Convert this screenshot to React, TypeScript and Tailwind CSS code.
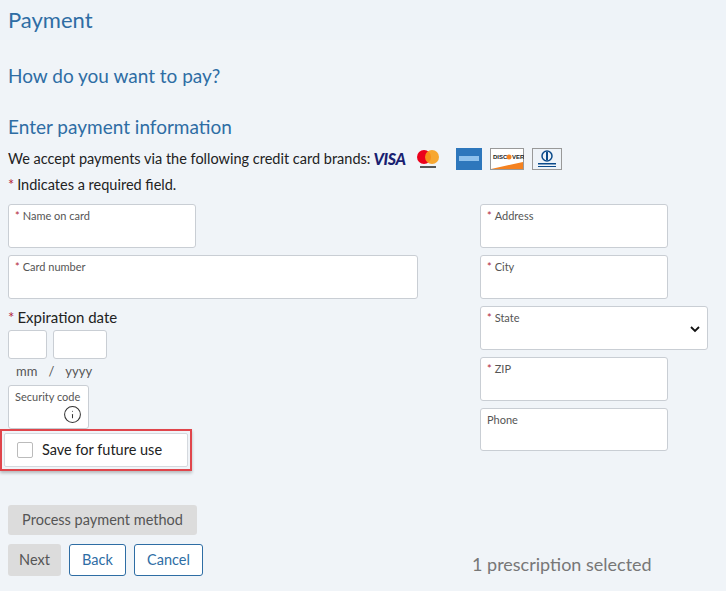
import { Info } from "lucide-react";

const Star = () => <span className="text-[#b3263a] mr-[3px]">*</span>;

const Field = ({ label, req, w, h = "h-[44px]" }: { label: string; req?: boolean; w: string; h?: string }) => (
  <div className={`${w} ${h} bg-white border border-[#c9ced4] rounded-[3px] px-[6px] pt-[3px] text-[11px] text-[#555]`}>
    {req && <Star />}
    {label}
  </div>
);

function Cards() {
  return (
    <span className="inline-flex items-center gap-[8px] ml-[3px]">
      <span className="text-[#1a1f71] font-black italic text-[16px] tracking-tight">VISA</span>
      <svg width="28" height="22" viewBox="0 0 28 22">
        <circle cx="10" cy="9" r="7" fill="#eb001b" />
        <circle cx="18" cy="9" r="7" fill="#f79e1b" opacity="0.9" />
        <rect x="6" y="18" width="16" height="2" fill="#555" />
      </svg>
      <svg width="26" height="22" viewBox="0 0 26 22" className="ml-[6px]">
        <rect width="26" height="22" fill="#2e77bc" />
        <rect x="3" y="8" width="20" height="5" fill="#8fc1ec" />
      </svg>
      <svg width="34" height="22" viewBox="0 0 34 22">
        <rect x="0.5" y="0.5" width="33" height="21" fill="#fff" stroke="#999" />
        <text x="3" y="11" fontSize="6" fontWeight="bold" fill="#222" fontFamily="Liberation Sans">DISC</text>
        <circle cx="19" cy="9" r="2.5" fill="#f58220" />
        <text x="22" y="11" fontSize="6" fontWeight="bold" fill="#222" fontFamily="Liberation Sans">VER</text>
        <path d="M1 21 L33 14 L33 21 Z" fill="#f58220" />
      </svg>
      <svg width="30" height="22" viewBox="0 0 30 22">
        <rect x="0.5" y="0.5" width="29" height="21" fill="#eef3f8" stroke="#999" />
        <circle cx="15" cy="8" r="5" fill="none" stroke="#0a4a8a" strokeWidth="1.5" />
        <rect x="14" y="4" width="2" height="8" fill="#0a4a8a" />
        <rect x="6" y="15" width="18" height="1.5" fill="#0a4a8a" />
        <rect x="6" y="18" width="18" height="1" fill="#0a4a8a" />
      </svg>
    </span>
  );
}

export default function App() {
  return (
    <div className="w-[726px] h-[591px] bg-[#f0f4f8] text-[#222] overflow-hidden" style={{ fontFamily: "Lato, 'Open Sans', sans-serif" }}>
      <div className="bg-[#eef3f8] h-[40px] px-[8px] pt-[3px] text-[22px] text-[#2e6da4]">Payment</div>
      <div className="px-[8px]">
        <div className="mt-[22px] text-[19px] text-[#2e6da4]">How do you want to pay?</div>
        <div className="mt-[22px] text-[19px] text-[#2e6da4]">Enter payment information</div>
        <div className="mt-[6px] flex items-center text-[14.5px] h-[24px]">
          We accept payments via the following credit card brands:
          <Cards />
        </div>
        <div className="text-[14.5px] mt-[3px]"><Star />Indicates a required field.</div>
        <div className="flex mt-[8px]">
          <div className="w-[472px] flex flex-col">
            <Field label="Name on card" req w="w-[188px]" />
            <div className="mt-[7px]"><Field label="Card number" req w="w-[410px]" /></div>
            <div className="mt-[7px] text-[15px]"><Star />Expiration date</div>
            <div className="flex gap-[6px] mt-[2px]">
              <div className="w-[39px] h-[29px] bg-white border border-[#c9ced4] rounded-[3px]" />
              <div className="w-[54px] h-[29px] bg-white border border-[#c9ced4] rounded-[3px]" />
            </div>
            <div className="flex text-[13px] text-[#555] mt-[3px] pl-[8px] gap-[11px]">
              <span>mm</span><span>/</span><span>yyyy</span>
            </div>
            <div className="mt-[3px] w-[81px] h-[44px] bg-white border border-[#c9ced4] rounded-[3px] px-[6px] pt-[3px] text-[11px] text-[#555] flex flex-col">
              Security code
              <Info size={19} strokeWidth={1.3} className="self-end text-[#333]" />
            </div>
            <div className="-ml-[8px] w-[192px] h-[42px] border-2 border-[#e0454b] p-[2px] shadow-[0_2px_3px_rgba(0,0,0,0.25)]">
              <div className="h-full bg-white border border-[#d5d9de] rounded-[2px] flex items-center pl-[12px] gap-[9px] text-[14.5px]">
                <span className="w-[16px] h-[16px] border border-[#bbb] rounded-[2px] bg-white" />
                Save for future use
              </div>
            </div>
          </div>
          <div className="flex flex-col gap-[7px]">
            <Field label="Address" req w="w-[188px]" />
            <Field label="City" req w="w-[188px]" />
            <div className="w-[228px] h-[44px] bg-white border border-[#c9ced4] rounded-[3px] px-[6px] pt-[3px] text-[11px] text-[#555] flex justify-between">
              <span><Star />State</span>
              <svg width="12" height="12" viewBox="0 0 12 12" className="mt-[13px]"><path d="M2 4 L6 8 L10 4" fill="none" stroke="#111" strokeWidth="1.8" /></svg>
            </div>
            <Field label="ZIP" req w="w-[188px]" />
            <Field label="Phone" w="w-[188px]" h="h-[43px]" />
          </div>
        </div>
        <div className="mt-[34px] w-[189px] h-[30px] bg-[#dcdcdc] rounded-[3px] flex items-center justify-center text-[14.5px] text-[#555]">Process payment method</div>
        <div className="flex items-center mt-[8px]">
          <div className="w-[53px] h-[32px] bg-[#dcdcdc] rounded-[3px] flex items-center justify-center text-[14.5px] text-[#555]">Next</div>
          <div className="ml-[8px] w-[57px] h-[32px] border border-[#2e6da4] rounded-[3px] bg-white flex items-center justify-center text-[14.5px] text-[#2e6da4]">Back</div>
          <div className="ml-[8px] w-[69px] h-[32px] border border-[#2e6da4] rounded-[3px] bg-white flex items-center justify-center text-[14.5px] text-[#2e6da4]">Cancel</div>
          <div className="ml-[269px] mt-[8px] text-[18px] text-[#777]">1 prescription selected</div>
        </div>
      </div>
    </div>
  );
}
